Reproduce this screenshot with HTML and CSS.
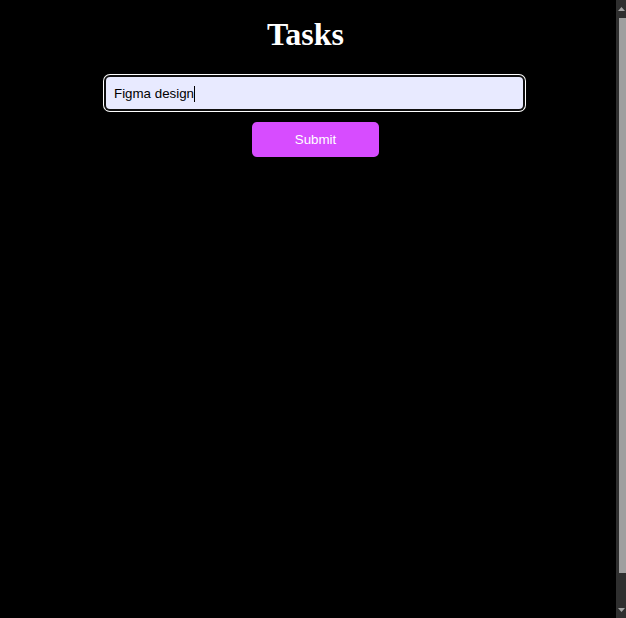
FILE: index.html
```html
<!DOCTYPE html>
<html lang="en">
<head>
<meta charset="utf-8">
<title>Tasks</title>
<link rel="stylesheet" href="styles.css">
</head>
<body>
<main class="page">
  <h1 class="title">Tasks</h1>
  <form class="task-form">
    <div class="field">
      <input class="task-input" type="text" value="Figma design" aria-label="Task">
      <span class="caret-line"></span>
    </div>
    <button class="submit-btn" type="button">Submit</button>
  </form>
</main>
<div class="scrollbar" aria-hidden="true">
  <div class="sb-btn">
    <svg width="7" height="4" viewBox="0 0 7 4"><path d="M3.5 0 L7 4 L0 4 Z" fill="#a3a3a3"/></svg>
  </div>
  <div class="sb-track"><div class="sb-thumb"></div></div>
  <div class="sb-btn">
    <svg width="7" height="4" viewBox="0 0 7 4"><path d="M0 0 L7 0 L3.5 4 Z" fill="#a3a3a3"/></svg>
  </div>
</div>
</body>
</html>
```

FILE: styles.css
```css
html {
  background: #000;
}

body {
  margin: 0;
  height: 100vh;
  overflow: hidden;
  display: flex;
  background: #000;
  font-family: "Liberation Sans", Arial, sans-serif;
}

.page {
  flex: 1;
  display: flex;
  flex-direction: column;
  align-items: center;
  padding-top: 16px;
  box-sizing: border-box;
}

.title {
  margin: 0 5px 0 0;
  font-family: "Liberation Serif", "Times New Roman", serif;
  font-size: 32px;
  line-height: 36px;
  font-weight: 700;
  color: #fff;
}

.task-form {
  margin-top: 25px;
  padding-left: 13px;
  display: flex;
  flex-direction: column;
  align-items: center;
  gap: 13px;
}

.field {
  position: relative;
}

.task-input {
  display: block;
  width: 417px;
  height: 32px;
  box-sizing: border-box;
  padding: 0 8px;
  border: none;
  border-radius: 4px;
  background: #e8eaff;
  color: #000;
  font-family: "Liberation Sans", Arial, sans-serif;
  font-size: 13.33px;
  outline: none;
  box-shadow: 0 0 0 2px #101010, 0 0 0 3px #fff;
}

.caret-line {
  position: absolute;
  left: 88px;
  top: 9px;
  width: 1px;
  height: 16px;
  background: #000;
}

.submit-btn {
  width: 127px;
  height: 35px;
  margin-left: 2px;
  border: none;
  border-radius: 5px;
  background: #d74cff;
  color: #fff;
  font-family: "Liberation Sans", Arial, sans-serif;
  font-size: 13.33px;
  cursor: pointer;
}

.scrollbar {
  width: 10px;
  flex: none;
  display: flex;
  flex-direction: column;
  background: #2f2f2f;
}

.sb-btn {
  height: 17px;
  display: flex;
  align-items: center;
  justify-content: flex-end;
  padding-right: 1px;
}

.sb-btn svg {
  display: block;
}

.sb-track {
  flex: 1;
  display: flex;
  justify-content: flex-end;
  padding-top: 1px;
}

.sb-thumb {
  width: 7px;
  height: 555px;
  background: #9f9f9f;
}
```
